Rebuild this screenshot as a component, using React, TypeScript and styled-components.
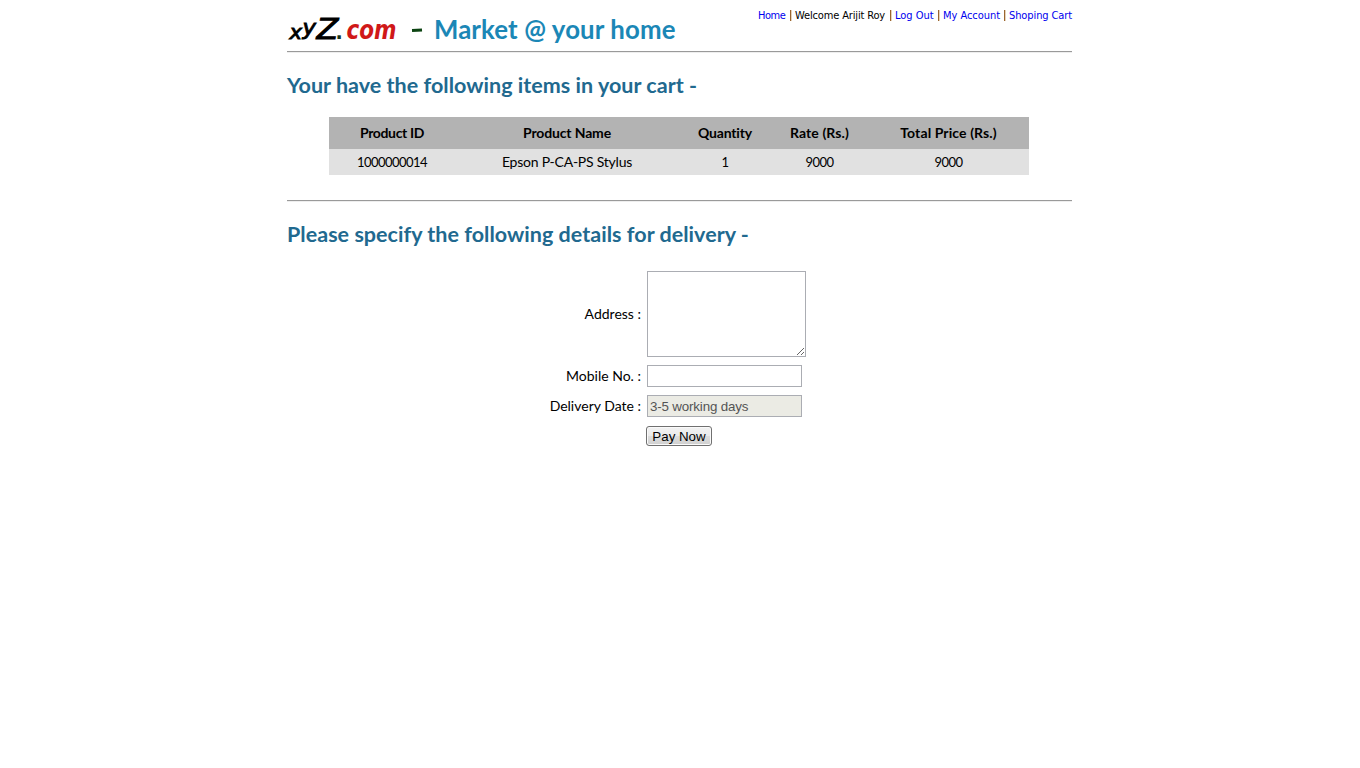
import React from "react";
import styled, { createGlobalStyle } from "styled-components";

const GlobalStyle = createGlobalStyle`
  body {
    margin: 0;
    background: #fff;
    color: #000;
    font-family: Lato, "Liberation Sans", sans-serif;
    font-size: 14px;
  }
`;

const Page = styled.main`
  width: 785px;
  min-height: 100vh;
  margin-left: 287px;
`;

const Header = styled.header`
  display: flex;
  justify-content: space-between;
  height: 51px;
`;

const Brand = styled.div`
  display: flex;
  align-items: flex-start;
`;

const LogoMark = styled.svg`
  display: block;
  width: 147px;
  height: 51px;
`;

const Tagline = styled.span`
  padding-top: 14px;
  color: #1b87b6;
  font-size: 25.8px;
  font-weight: 700;
  line-height: 30px;
  letter-spacing: 0.12px;
  white-space: nowrap;
`;

const Nav = styled.nav`
  display: flex;
  padding-top: 9px;
  font-family: "DejaVu Sans Condensed", "DejaVu Sans", sans-serif;
  font-stretch: condensed;
  font-size: 11px;
  line-height: 14px;
  white-space: nowrap;
`;

const NavItem = styled.span<{ $width: number; $spacing?: number }>`
  width: ${(p) => p.$width}px;
  letter-spacing: ${(p) => p.$spacing ?? 0}px;
`;

const NavLink = styled(NavItem).attrs({ as: "a", href: "#" })`
  color: #0000ee;
  text-decoration: none;
`;

const Divider = styled.span<{ $before: number; $after: number }>`
  width: 1px;
  height: 11px;
  margin: 1px ${(p) => p.$after}px 0 ${(p) => p.$before}px;
  background: #9a6630;
  box-shadow: 1px 0 0 #e6d2ba;
`;

const Rule = styled.hr`
  height: 0;
  margin: 0;
  border: 0;
  border-top: 1px solid #9a9a9a;
  border-bottom: 1px solid #eee;
`;

const Heading = styled.h2`
  margin: 0;
  padding: 18px 0 1px;
  color: #21698f;
  font-size: 21.5px;
  font-weight: 700;
  line-height: 28px;
  letter-spacing: 0.03px;
  white-space: nowrap;
`;

const CartTable = styled.table`
  width: 700px;
  margin: 17px 0 25px 42px;
  border-collapse: collapse;
  table-layout: fixed;
  text-align: center;
`;

const HeadCell = styled.th<{ $width: number; $spacing: number }>`
  width: ${(p) => p.$width}px;
  height: 32px;
  padding: 0;
  background: #b3b3b3;
  font-size: 14px;
  line-height: 18px;
  letter-spacing: ${(p) => p.$spacing}px;
`;

const Cell = styled.td<{ $numeric?: boolean }>`
  height: 26px;
  padding: 0;
  background: #e1e1e1;
  font-size: ${(p) => (p.$numeric ? 13 : 14)}px;
  line-height: 18px;
  letter-spacing: ${(p) => (p.$numeric ? -0.54 : -0.23)}px;
`;

const DeliveryForm = styled.form`
  display: grid;
  grid-template-columns: 354px 160px;
  grid-template-rows: 86px 22px 22px 22px;
  column-gap: 6px;
  row-gap: 8px;
  align-items: center;
  padding-top: 22px;
`;

const Label = styled.label`
  text-align: right;
  line-height: 18px;
`;

const AddressBox = styled.textarea`
  box-sizing: border-box;
  width: 159px;
  height: 86px;
  margin: 0;
  border: 1px solid #abadb3;
  border-radius: 0;
  background: #fff;
`;

const Field = styled.input`
  box-sizing: border-box;
  width: 155px;
  height: 22px;
  margin: 0;
  padding: 1px 2px;
  border: 1px solid #abadb3;
  border-radius: 0;
  background: #fff;
  font: 13.33px "Liberation Sans", sans-serif;
  letter-spacing: -0.16px;

  &:disabled {
    background: #ebebe4;
    color: #545454;
  }
`;

const PayButton = styled.button`
  box-sizing: border-box;
  grid-column: 2;
  width: 66px;
  height: 20px;
  margin: 0 0 0 -1px;
  padding: 1px 0 0;
  border: 1px solid #707070;
  border-radius: 3px;
  background: linear-gradient(#f2f2f2 0%, #ebebeb 48%, #dddddd 52%, #cfcfcf 100%);
  box-shadow: inset 0 0 0 1px #fafafa;
  color: #000;
  font: 13.33px/17px "Liberation Sans", sans-serif;
`;

const columns = [
  { title: "Product ID", width: 126, spacing: -0.36 },
  { title: "Product Name", width: 224, spacing: -0.14 },
  { title: "Quantity", width: 92, spacing: -0.18 },
  { title: "Rate (Rs.)", width: 97, spacing: 0.1 },
  { title: "Total Price (Rs.)", width: 161, spacing: 0.1 },
];

const cart = [["1000000014", "Epson P-CA-PS Stylus", "1", "9000", "9000"]];

function Logo() {
  return (
    <LogoMark viewBox="0 0 147 51" fontFamily="DejaVu Sans, sans-serif">
      <text x="2.5" y="39" fontSize="19" fontStyle="italic" textLength="12.5" lengthAdjust="spacingAndGlyphs" stroke="#000" strokeWidth=".9">x</text>
      <text x="15.5" y="35" fontSize="21" fontStyle="italic" textLength="13.5" lengthAdjust="spacingAndGlyphs" stroke="#000" strokeWidth=".9">y</text>
      <text x="29.5" y="38.5" fontSize="28" fontStyle="italic" textLength="22" lengthAdjust="spacingAndGlyphs" stroke="#000" strokeWidth=".9">Z</text>
      <text x="48.5" y="38.5" fontSize="19" fontWeight="700" fill="#15351a">.</text>
      <text x="59.5" y="38.5" fontSize="26" fontStyle="italic" fontWeight="700" fill="#d01818" textLength="50" lengthAdjust="spacingAndGlyphs">com</text>
      <line x1="125" y1="30.5" x2="135" y2="30" stroke="#0c4412" strokeWidth="2.8" />
    </LogoMark>
  );
}

export default function App() {
  return (
    <>
      <GlobalStyle />
      <Page>
        <Header>
          <Brand>
            <Logo />
            <Tagline>Market @ your home</Tagline>
          </Brand>
          <Nav>
            <NavLink $width={27} $spacing={-0.5}>Home</NavLink>
            <Divider $before={5} $after={4} />
            <NavItem $width={90} $spacing={-0.15}>Welcome Arijit Roy</NavItem>
            <Divider $before={5} $after={4} />
            <NavLink $width={39}>Log Out</NavLink>
            <Divider $before={4} $after={4} />
            <NavLink $width={57} $spacing={-0.05}>My Account</NavLink>
            <Divider $before={4} $after={4} />
            <NavLink $width={63} $spacing={-0.1}>Shoping Cart</NavLink>
          </Nav>
        </Header>
        <Rule />
        <Heading>Your have the following items in your cart -</Heading>
        <CartTable>
          <thead>
            <tr>
              {columns.map((c) => (
                <HeadCell key={c.title} $width={c.width} $spacing={c.spacing}>{c.title}</HeadCell>
              ))}
            </tr>
          </thead>
          <tbody>
            {cart.map((row) => (
              <tr key={row[0]}>
                {row.map((value, i) => (
                  <Cell key={i} $numeric={i !== 1}>{value}</Cell>
                ))}
              </tr>
            ))}
          </tbody>
        </CartTable>
        <Rule />
        <Heading>Please specify the following details for delivery -</Heading>
        <DeliveryForm>
          <Label htmlFor="address">Address :</Label>
          <AddressBox id="address" />
          <Label htmlFor="mobile">Mobile No. :</Label>
          <Field id="mobile" />
          <Label htmlFor="date">Delivery Date :</Label>
          <Field id="date" disabled defaultValue="3-5 working days" />
          <PayButton type="button">Pay Now</PayButton>
        </DeliveryForm>
      </Page>
    </>
  );
}
